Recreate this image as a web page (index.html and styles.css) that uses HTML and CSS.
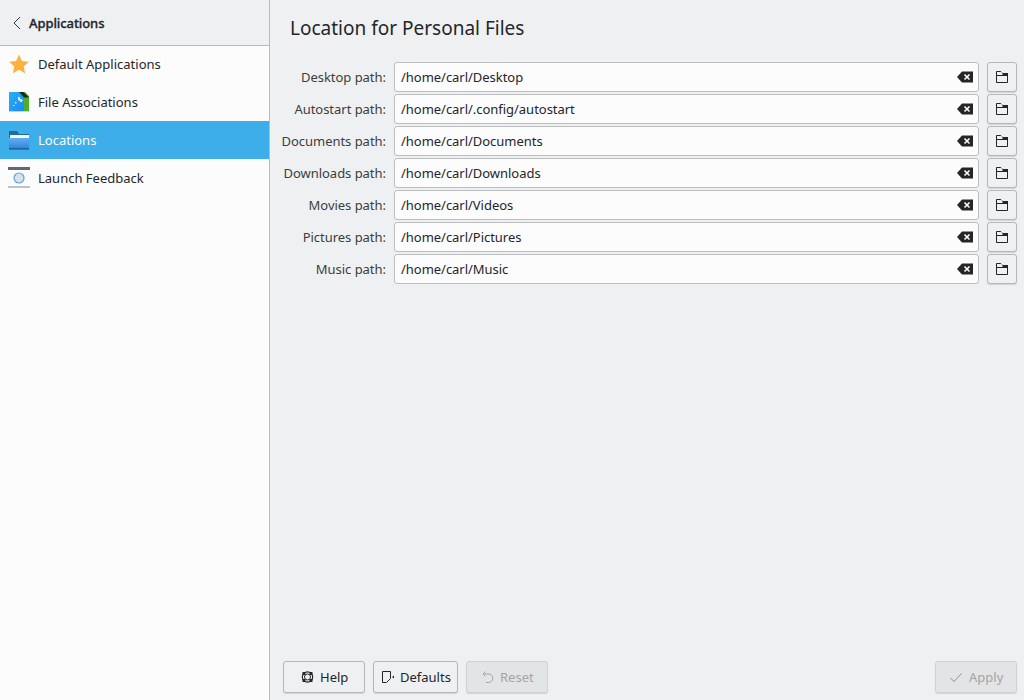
FILE: index.html
```html
<!DOCTYPE html>
<html lang="en">
<head>
  <meta charset="UTF-8">
  <title>Location for Personal Files</title>
  <link rel="stylesheet" href="styles.css">
</head>
<body>
  <div class="app">
    <aside class="sidebar">
      <div class="side-head">
        <svg class="back" width="10" height="16" viewBox="0 0 10 16"><path d="M8 2 L2 8 L8 14" fill="none" stroke="#31363b" stroke-width="1"/></svg>
        <span>Applications</span>
      </div>
      <ul class="side-list">
        <li class="side-item">
          <svg width="22" height="22" viewBox="0 0 22 22"><path d="M11 1.5 L13.9 7.9 L20.8 8.7 L15.7 13.4 L17.1 20.3 L11 16.8 L4.9 20.3 L6.3 13.4 L1.2 8.7 L8.1 7.9 Z" fill="#fdb13f"/></svg>
          <span>Default Applications</span>
        </li>
        <li class="side-item">
          <svg width="22" height="22" viewBox="0 0 22 22"><defs><linearGradient id="fa" x1="0" y1="0" x2="1" y2="1"><stop offset="0" stop-color="#2bb0f5"/><stop offset="1" stop-color="#1a86ee"/></linearGradient></defs><rect x="1" y="1" width="16" height="20" fill="url(#fa)"/><path d="M16 1 H17 L21 5 V21 H16 Z" fill="#4caf2c"/><path d="M11 1 H15.5 L21 6.5 H16 Z" fill="#232629"/><rect x="1" y="20" width="20" height="1" fill="#a9dcf7"/><path d="M10 6 h2 v2 h1.5 l1.5 1.5 -1.5 1.5 h-1.5 v-1.5 h-2 z M7 11 h1.5 v1.5 h-1.5 z M5 14 h1.5 v1 h-1.5 z" fill="#cfeeff"/></svg>
          <span>File Associations</span>
        </li>
        <li class="side-item active">
          <svg width="22" height="22" viewBox="0 0 22 22"><defs><linearGradient id="loc" x1="0" y1="0" x2="0" y2="1"><stop offset="0" stop-color="#62aef2"/><stop offset="1" stop-color="#2f86dd"/></linearGradient></defs><path d="M1 2 H9 L11 5 H21 V20 H1 Z" fill="#1b6ba5"/><rect x="2" y="6" width="19" height="3" fill="#f4f8fb"/><rect x="1" y="9" width="20" height="10.500" fill="url(#loc)"/><rect x="1" y="19.500" width="20" height="1" fill="#174f7c"/></svg>
          <span>Locations</span>
        </li>
        <li class="side-item">
          <svg width="22" height="22" viewBox="0 0 22 22"><rect x="0" y="0" width="22" height="21" fill="#fafcfd"/><rect x="0" y="0" width="22" height="3" fill="#63686d"/><rect x="0" y="19" width="22" height="2" fill="#bcc2c6"/><circle cx="11" cy="11" r="5" fill="#dde1e5" stroke="#5aa6e6" stroke-width="1.200"/></svg>
          <span>Launch Feedback</span>
        </li>
      </ul>
    </aside>

    <main class="content">
      <h1 class="title">Location for Personal Files</h1>
      <div class="form">
        <label class="field-label">Desktop path:</label>
        <div class="input"><span>/home/carl/Desktop</span><svg width="16" height="12" viewBox="0 0 16 12"><use href="#clear"/></svg></div>
        <button class="pick"><svg width="12" height="12" viewBox="0 0 12 12"><use href="#folder"/></svg></button>

        <label class="field-label">Autostart path:</label>
        <div class="input"><span>/home/carl/.config/autostart</span><svg width="16" height="12" viewBox="0 0 16 12"><use href="#clear"/></svg></div>
        <button class="pick"><svg width="12" height="12" viewBox="0 0 12 12"><use href="#folder"/></svg></button>

        <label class="field-label">Documents path:</label>
        <div class="input"><span>/home/carl/Documents</span><svg width="16" height="12" viewBox="0 0 16 12"><use href="#clear"/></svg></div>
        <button class="pick"><svg width="12" height="12" viewBox="0 0 12 12"><use href="#folder"/></svg></button>

        <label class="field-label">Downloads path:</label>
        <div class="input"><span>/home/carl/Downloads</span><svg width="16" height="12" viewBox="0 0 16 12"><use href="#clear"/></svg></div>
        <button class="pick"><svg width="12" height="12" viewBox="0 0 12 12"><use href="#folder"/></svg></button>

        <label class="field-label">Movies path:</label>
        <div class="input"><span>/home/carl/Videos</span><svg width="16" height="12" viewBox="0 0 16 12"><use href="#clear"/></svg></div>
        <button class="pick"><svg width="12" height="12" viewBox="0 0 12 12"><use href="#folder"/></svg></button>

        <label class="field-label">Pictures path:</label>
        <div class="input"><span>/home/carl/Pictures</span><svg width="16" height="12" viewBox="0 0 16 12"><use href="#clear"/></svg></div>
        <button class="pick"><svg width="12" height="12" viewBox="0 0 12 12"><use href="#folder"/></svg></button>

        <label class="field-label">Music path:</label>
        <div class="input"><span>/home/carl/Music</span><svg width="16" height="12" viewBox="0 0 16 12"><use href="#clear"/></svg></div>
        <button class="pick"><svg width="12" height="12" viewBox="0 0 12 12"><use href="#folder"/></svg></button>
      </div>

      <footer class="footer">
        <button class="btn btn-help">
          <svg width="15" height="14" viewBox="0 0 15 14"><circle cx="7.500" cy="7" r="5.200" fill="none" stroke="#232629" stroke-width="1.200"/><path d="M2.500 2 H5.500 V5 H2.500 Z M9.500 2 H12.500 V5 H9.500 Z M2.500 9 H5.500 V12 H2.500 Z M9.500 9 H12.500 V12 H9.500 Z" fill="#232629"/><circle cx="7.500" cy="7" r="3" fill="#eff0f1" stroke="#232629" stroke-width="1"/></svg>
          Help
        </button>
        <button class="btn btn-defaults">
          <svg width="15" height="14" viewBox="0 0 15 14"><path d="M2.500 1.500 H10.500 V8.500 L6.500 12.500 H2.500 Z" fill="none" stroke="#232629" stroke-width="1"/><path d="M12 7 L14 5.500 V8.500 Z" fill="#232629"/></svg>
          Defaults
        </button>
        <button class="btn btn-reset" disabled>
          <svg width="14" height="14" viewBox="0 0 14 14"><path d="M5.500 1.500 L3 4 L5.500 6.500 M3 4 H8.500 A4 4 0 0 1 8.500 12.500 H6" fill="none" stroke="#a3a5a7" stroke-width="1"/></svg>
          Reset
        </button>
        <button class="btn btn-apply" disabled>
          <svg width="14" height="14" viewBox="0 0 14 14"><path d="M1.500 8 L5 11.500 L12.500 3.500" fill="none" stroke="#8f9193" stroke-width="1"/></svg>
          Apply
        </button>
      </footer>
    </main>
  </div>

  <!-- shared icons -->
  <svg class="defs" width="0" height="0">
    <defs>
      <g id="clear">
        <path d="M5 0.500 H16 V11.500 H5 L0 6 Z" fill="#232629"/>
        <path d="M7.500 3.500 L12.500 8.500 M12.500 3.500 L7.500 8.500" stroke="#fcfcfc" stroke-width="1.600"/>
      </g>
      <g id="folder">
        <path d="M0.500 11.500 V0.500 H5" fill="none" stroke="#232629" stroke-width="1"/>
        <path d="M5 0.500 L7 2.500" fill="none" stroke="#8a8c8e" stroke-width="1"/>
        <path d="M0.500 11.500 H11.500 V4 M0.500 4.500 H11.500" fill="none" stroke="#232629" stroke-width="1"/>
        <path d="M6.500 2 H12 V5 H6.500 Z" fill="#232629"/>
      </g>
    </defs>
  </svg>
</body>
</html>
```

FILE: styles.css
```css
* { box-sizing: border-box; }

html, body {
  margin: 0; padding: 0;
  width: 100%; height: 100%;
  overflow: hidden;
}
body {
  background: #eff0f1; color: #232629;
  font-family: "Noto Sans", sans-serif;
  font-size: 13px;
}
.defs { position: absolute; }

.app { display: flex; height: 700px; }

/* Sidebar */
.sidebar {
  width: 270px; flex: none;
  background: #fcfcfc;
  border-right: 1px solid #b9bbbd;
}
.side-head {
  height: 46px;
  display: flex; align-items: center;
  gap: 7px; padding-left: 12px;
  background: #eff0f1;
  border-bottom: 1px solid #b9bbbd;
  font-weight: 500;
  letter-spacing: -0.08px;
  -webkit-text-stroke: 0.3px #232629;
}
.side-list { list-style: none; margin: 0; padding: 0; margin-top: -1px; }
.side-item {
  height: 38px;
  display: flex; align-items: center;
  gap: 8px; padding-left: 8px;
}
.side-item.active { background: #3daee9; color: #fcfcfc; }

/* Main panel */
.content {
  flex: 1;
  display: flex; flex-direction: column;
  min-width: 0;
  padding: 0 7px 7px 13px;
}
.title {
  margin: 15px 0 0 7px;
  height: 47px;
  font-size: 19px; font-weight: 400; line-height: 27px;
}

.form {
  display: grid;
  grid-template-columns: 103px 1fr 30px;
  grid-auto-rows: 30px;
  column-gap: 8px; row-gap: 2px;
  align-items: stretch;
  flex: 1;
  align-content: start;
  letter-spacing: -0.03px;
}
.field-label {
  display: flex; align-items: center; justify-content: flex-end;
  color: #3a3e42;
  white-space: nowrap;
}
.input {
  display: flex; align-items: center; justify-content: space-between;
  padding: 0 5px 0 6px;
  background: #fcfcfc;
  border: 1px solid #bcbebf;
  border-radius: 3px;
}
.pick {
  display: flex; align-items: center; justify-content: center;
  padding: 0;
  background: #eff0f1;
  border: 1px solid #b5b7b9;
  border-radius: 3px;
  box-shadow: 0 1px 1px rgba(0,0,0,0.12);
}

/* Bottom buttons */
.footer { display: flex; gap: 8px; height: 32px; }
.btn {
  display: flex; align-items: center;
  gap: 6px; padding: 0;
  height: 32px;
  font: inherit; color: #232629;
  background: #eff0f1;
  border: 1px solid #b5b7b9;
  border-radius: 3px;
  box-shadow: 0 1px 1px rgba(0,0,0,0.12);
}
.btn[disabled] {
  color: #a3a5a7;
  background: #e3e4e5;
  border-color: #d0d1d2;
}
.btn-help { width: 82px; padding-left: 16px; gap: 5px; }
.btn-defaults { width: 85px; padding-left: 6px; gap: 5px; }
.btn-reset { width: 82px; padding-left: 13px; }
.btn-apply { width: 82px; margin-left: auto; padding-left: 13px; }
```
